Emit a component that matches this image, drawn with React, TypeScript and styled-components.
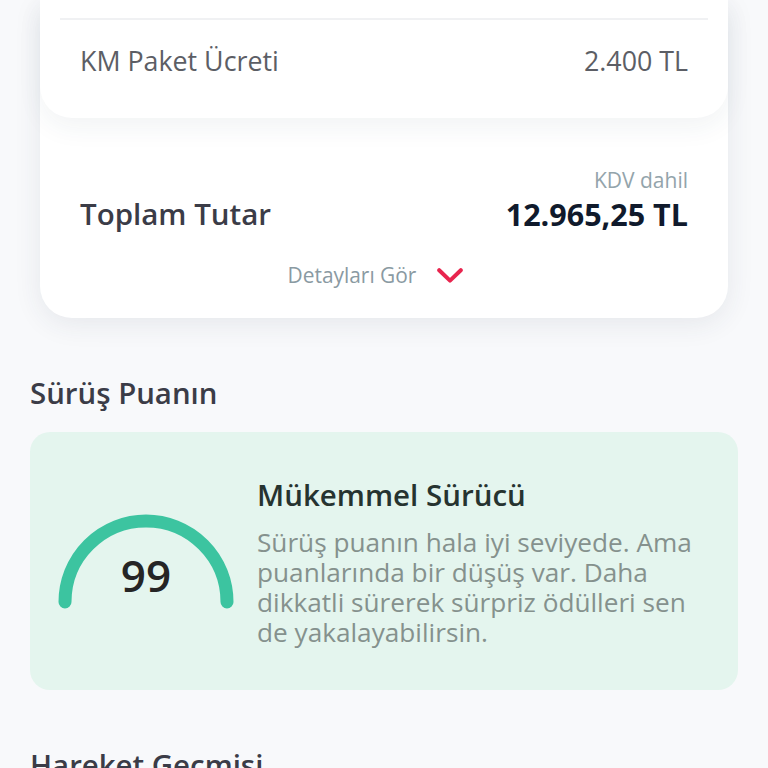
import React from "react";
import styled, { createGlobalStyle } from "styled-components";

const Global = createGlobalStyle`
  html, body { margin: 0; padding: 0; background: #f8f9fb; }
  body { font-family: "Open Sans", "Noto Sans", sans-serif; -webkit-font-smoothing: antialiased; }
  * { box-sizing: border-box; }
`;

const Page = styled.div`
  width: 768px;
  height: 768px;
  overflow: hidden;
  background: #f8f9fb;
  padding: 0 30px;
`;

const SummaryCard = styled.div`
  margin: 0 10px;
  background: #ffffff;
  border-radius: 0 0 32px 32px;
  box-shadow: 0 6px 28px rgba(40, 60, 80, 0.09);
`;

const BreakdownCard = styled.div`
  background: #ffffff;
  border-radius: 0 0 32px 32px;
  padding: 18px 20px 18px;
  box-shadow: 0 10px 26px rgba(40, 60, 80, 0.06);
  position: relative;
  z-index: 1;
`;

const Divider = styled.div`
  height: 2px;
  background: #f0f1f3;
`;

const Row = styled.div`
  display: flex;
  justify-content: space-between;
  align-items: center;
  height: 80px;
  padding: 0 20px;
`;

const RowText = styled.span`
  font-size: 26.8px;
  color: #5c5e65;
`;

const TotalSection = styled.div`
  padding: 48px 40px 0;
  height: 200px;
`;

const TotalRow = styled.div`
  display: flex;
  justify-content: space-between;
  align-items: flex-end;
`;

const TotalLabel = styled.span`
  font-size: 29.5px;
  font-weight: 600;
  color: #3b3c47;
  line-height: 36px;
`;

const TotalRight = styled.div`
  display: flex;
  flex-direction: column;
  align-items: flex-end;
`;

const TaxNote = styled.span`
  font-size: 21px;
  color: #93a4ab;
  line-height: 28px;
  margin-bottom: 2px;
`;

const TotalValue = styled.span`
  font-size: 30.5px;
  font-weight: 700;
  color: #101a2c;
  line-height: 36px;
`;

const DetailsToggle = styled.div`
  display: flex;
  justify-content: center;
  align-items: center;
  gap: 21px;
  margin-top: 28px;
  padding-right: 17px;
  height: 30px;
`;

const DetailsText = styled.span`
  font-size: 20.9px;
  color: #8a9aa2;
  line-height: 30px;
`;

const SectionTitle = styled.h2`
  margin: 0;
  padding: 57px 0 21px;
  font-size: 29.4px;
  font-weight: 600;
  color: #3b3c47;
  line-height: 36px;
`;

const ScoreCard = styled.div`
  display: flex;
  align-items: center;
  height: 258px;
  background: #e4f5ee;
  border-radius: 20px;
  padding: 2px 28px 0 28px;
  gap: 23px;
`;

const Gauge = styled.div`
  position: relative;
  width: 176px;
  height: 100px;
  flex-shrink: 0;
  margin-top: 4px;
`;

const GaugeValue = styled.span`
  position: absolute;
  left: 0;
  right: 0;
  top: 37px;
  text-align: center;
  font-size: 44px;
  font-weight: 600;
  color: #252525;
  line-height: 48px;
`;

const ScoreText = styled.div`
  display: flex;
  flex-direction: column;
`;

const ScoreTitle = styled.span`
  font-size: 29.5px;
  font-weight: 600;
  color: #263330;
  line-height: 36px;
  margin-bottom: 14px;
`;

const ScoreBody = styled.p`
  margin: 0;
  font-size: 26.2px;
  color: #85918d;
  line-height: 30px;
  white-space: nowrap;
`;

const NextTitle = styled(SectionTitle)`
  padding-top: 57px;
`;

export default function App() {
  return (
    <>
      <Global />
      <Page>
        <SummaryCard>
          <BreakdownCard>
            <Divider />
            <Row>
              <RowText>KM Paket Ücreti</RowText>
              <RowText>2.400 TL</RowText>
            </Row>
          </BreakdownCard>
          <TotalSection>
            <TotalRow>
              <TotalLabel>Toplam Tutar</TotalLabel>
              <TotalRight>
                <TaxNote>KDV dahil</TaxNote>
                <TotalValue>12.965,25 TL</TotalValue>
              </TotalRight>
            </TotalRow>
            <DetailsToggle>
              <DetailsText>Detayları Gör</DetailsText>
              <svg width="26" height="15" viewBox="0 0 26 15">
                <polyline
                  points="2.2,2.2 13,12.6 23.8,2.2"
                  fill="none"
                  stroke="#e8254e"
                  strokeWidth="4"
                  strokeLinecap="round"
                  strokeLinejoin="round"
                />
              </svg>
            </DetailsToggle>
          </TotalSection>
        </SummaryCard>

        <SectionTitle>Sürüş Puanın</SectionTitle>
        <ScoreCard>
          <Gauge>
            <svg width="176" height="100" viewBox="0 0 176 100">
              <path
                d="M 7 88 A 81 81 0 0 1 169 88"
                fill="none"
                stroke="#3cc4a0"
                strokeWidth="13"
                strokeLinecap="round"
              />
            </svg>
            <GaugeValue>99</GaugeValue>
          </Gauge>
          <ScoreText>
            <ScoreTitle>Mükemmel Sürücü</ScoreTitle>
            <ScoreBody>
              Sürüş puanın hala iyi seviyede. Ama
              <br />
              puanlarında bir düşüş var. Daha
              <br />
              dikkatli sürerek sürpriz ödülleri sen
              <br />
              de yakalayabilirsin.
            </ScoreBody>
          </ScoreText>
        </ScoreCard>
        <NextTitle>Hareket Geçmisi</NextTitle>
      </Page>
    </>
  );
}
